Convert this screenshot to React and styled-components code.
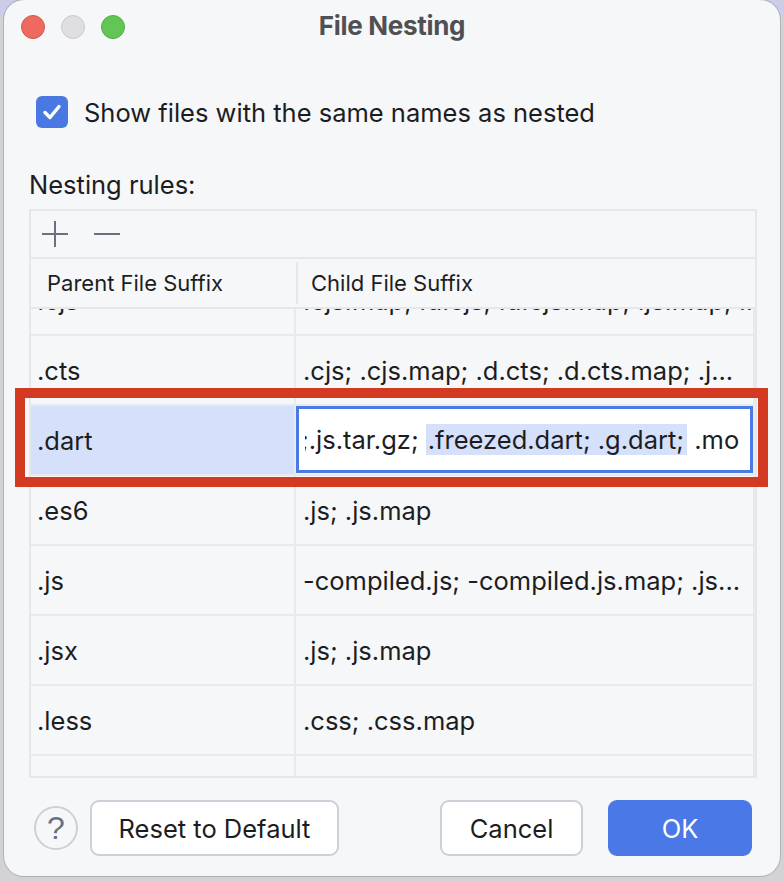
import React from 'react';
import styled, { createGlobalStyle } from 'styled-components';

const Global = createGlobalStyle`
  html, body { margin: 0; padding: 0; }
  body {
    width: 784px;
    height: 882px;
    overflow: hidden;
    background: #d3d3d6;
    font-family: Inter, "Noto Sans", "Liberation Sans", sans-serif;
    color: #1d1d1f;
  }
`;

const Screen = styled.div`
  position: relative;
  width: 784px;
  height: 882px;
  padding-left: 4px;
  box-sizing: border-box;
  background: linear-gradient(180deg, #cbcde6 0px, #cbcde6 16px, #d3d3d6 16px);
`;

const Window = styled.div`
  width: 776px;
  height: 876px;
  border-radius: 20px;
  background: #f6f7f9;
  box-shadow: 0 0 0 1px rgba(0, 0, 0, 0.16);
  display: flex;
  flex-direction: column;
  overflow: hidden;
`;

const TitleBar = styled.div`
  height: 52px;
  display: grid;
  grid-template-columns: 1fr auto 1fr;
  align-items: center;
  padding: 2px 17px 0;
  box-sizing: border-box;
`;

const Lights = styled.div`
  display: flex;
  gap: 16px;
`;

const Light = styled.span`
  width: 24px;
  height: 24px;
  border-radius: 50%;
  box-sizing: border-box;
  background: ${p => p.$c};
  border: 1px solid ${p => p.$b};
`;

const Title = styled.div`
  font-size: 26px;
  font-weight: 700;
  color: #505053;
  margin-top: -4px;
  letter-spacing: -0.3px;
`;

const Content = styled.div`
  flex: 1;
  display: flex;
  flex-direction: column;
  padding: 0 23px 20px 25px;
`;

const CheckRow = styled.label`
  margin-top: 44px;
  padding-left: 7px;
  display: flex;
  align-items: center;
  gap: 16px;
  height: 32px;
  font-size: 25.5px;
`;

const CheckBox = styled.span`
  width: 32px;
  height: 32px;
  border-radius: 6px;
  background: #4a78e3;
  display: flex;
  align-items: center;
  justify-content: center;
`;

const SectionLabel = styled.div`
  margin-top: 42px;
  height: 30px;
  line-height: 30px;
  font-size: 25.5px;
`;

const Table = styled.div`
  margin-top: 9px;
  height: 569px;
  border: 2px solid #e6e7eb;
  box-sizing: border-box;
  display: flex;
  flex-direction: column;
`;

const Toolbar = styled.div`
  height: 48px;
  border-bottom: 2px solid #e6e7eb;
  box-sizing: border-box;
  display: flex;
  align-items: center;
  padding-left: 11px;
  gap: 26px;
`;

const Header = styled.div`
  height: 50px;
  border-bottom: 2px solid #e6e7eb;
  box-sizing: border-box;
  display: grid;
  grid-template-columns: 265px 1fr;
  align-items: center;
  font-size: 22px;
`;

const HeaderCell = styled.div`
  position: relative;
  padding-left: ${p => (p.$first ? '16px' : '15px')};
  height: 100%;
  display: flex;
  align-items: center;
  &::before {
    content: ${p => (p.$first ? 'none' : "''")};
    position: absolute;
    left: 0;
    top: 3px;
    bottom: 3px;
    width: 2px;
    background: #e6e7eb;
  }
`;

const Body = styled.div`
  flex: 1;
  overflow: hidden;
`;

const Rows = styled.div`
  margin-top: -43px;
`;

const Row = styled.div`
  height: 70px;
  border-bottom: 2px solid #e9eaee;
  box-sizing: border-box;
  display: grid;
  grid-template-columns: 263px 2px 1fr 2px;
  font-size: 25.5px;
`;

const Sep = styled.div`
  background: #e9eaee;
`;

const Cell = styled.div`
  display: flex;
  align-items: center;
  padding-left: ${p => (p.$first ? '6px' : '7px')};
  white-space: nowrap;
  overflow: hidden;
  background: ${p => (p.$selected ? '#d5e0fa' : 'transparent')};
`;

const EditorCell = styled.div`
  display: flex;
  align-items: stretch;
  padding: 0 0 1px;
  background: #f6f7f9;
`;

const Editor = styled.div`
  flex: 1;
  background: #ffffff;
  border: 3px solid #4a7ae6;
  box-sizing: border-box;
  display: flex;
  align-items: center;
  padding-left: 6px;
`;

const Viewport = styled.div`
  flex: 1;
  overflow: hidden;
  white-space: nowrap;
`;

const Scrolled = styled.span`
  display: inline-block;
  margin-left: -4px;
`;

const Highlight = styled.span`
  background: #d5e0fa;
  line-height: 31px;
  display: inline-block;
  padding: 0 3px 0 2px;
`;

const Footer = styled.div`
  margin-top: 22px;
  height: 56px;
  display: flex;
  align-items: center;
  padding: 0 5px;
`;

const Help = styled.button`
  width: 44px;
  height: 44px;
  border-radius: 50%;
  border: 2px solid #cdd0d8;
  background: #f6f7f9;
  color: #6c707e;
  font-family: "Liberation Sans", sans-serif;
  font-size: 32px;
  font-weight: 400;
  padding: 0;
  display: flex;
  align-items: center;
  justify-content: center;
  margin-right: 12px;
`;

const Button = styled.button`
  width: ${p => p.$w}px;
  height: 56px;
  border-radius: 9px;
  box-sizing: border-box;
  font-family: inherit;
  font-size: 25.5px;
  padding: 0;
  border: ${p => (p.$primary ? 'none' : '2px solid #cdd0d8')};
  background: ${p => (p.$primary ? '#4a78e6' : '#ffffff')};
  color: ${p => (p.$primary ? '#ffffff' : '#1d1d1f')};
  margin-left: ${p => p.$ml || 0}px;
`;

const Spacer = styled.div`
  flex: 1;
`;

const Annotation = styled.div`
  position: absolute;
  left: 15px;
  top: 388px;
  width: 753px;
  height: 99px;
  border: 10px solid #d23a21;
  box-sizing: border-box;
  pointer-events: none;
`;

const rows = [
  ['.cjs', '.cjs.map; .d.cjs; .d.cjs.map; .js.map; .map'],
  ['.cts', '.cjs; .cjs.map; .d.cts; .d.cts.map; .j...'],
  ['.dart', null],
  ['.es6', '.js; .js.map'],
  ['.js', '-compiled.js; -compiled.js.map; .js...'],
  ['.jsx', '.js; .js.map'],
  ['.less', '.css; .css.map'],
  ['', ''],
];

export default function App() {
  return (
    <>
      <Global />
      <Screen>
        <Window>
          <TitleBar>
            <Lights>
              <Light $c="#ee6a5f" $b="#d5574c" />
              <Light $c="#dfdfe1" $b="#c9c9cc" />
              <Light $c="#62c555" $b="#52ad45" />
            </Lights>
            <Title>File Nesting</Title>
            <div />
          </TitleBar>
          <Content>
            <CheckRow>
              <CheckBox>
                <svg width="22" height="22" viewBox="0 0 22 22">
                  <path d="M4 11.5 L9 16.5 L18 5.5" fill="none" stroke="#fff" strokeWidth="3.4" strokeLinecap="round" strokeLinejoin="round" />
                </svg>
              </CheckBox>
              Show files with the same names as nested
            </CheckRow>
            <SectionLabel>Nesting rules:</SectionLabel>
            <Table>
              <Toolbar>
                <svg width="26" height="26" viewBox="0 0 26 26">
                  <path d="M13 0 V26 M0 13 H26" stroke="#6c707e" strokeWidth="2" />
                </svg>
                <svg width="26" height="26" viewBox="0 0 26 26">
                  <path d="M0 13 H26" stroke="#6c707e" strokeWidth="2" />
                </svg>
              </Toolbar>
              <Header>
                <HeaderCell $first>Parent File Suffix</HeaderCell>
                <HeaderCell>Child File Suffix</HeaderCell>
              </Header>
              <Body>
                <Rows>
                  {rows.map(([a, b], i) => (
                    <Row key={i}>
                      <Cell $first $selected={b === null}>{a}</Cell>
                      <Sep />
                      {b === null ? (
                        <EditorCell>
                          <Editor>
                            <Viewport>
                              <Scrolled>
                                ;.js.tar.gz;{' '}
                                <Highlight>.freezed.dart; .g.dart;</Highlight>
                                {' '}.mo
                              </Scrolled>
                            </Viewport>
                          </Editor>
                        </EditorCell>
                      ) : (
                        <Cell>{b}</Cell>
                      )}
                      <Sep />
                    </Row>
                  ))}
                </Rows>
              </Body>
            </Table>
            <Footer>
              <Help>?</Help>
              <Button $w={249}>Reset to Default</Button>
              <Spacer />
              <Button $w={143}>Cancel</Button>
              <Button $w={144} $primary $ml={25}>OK</Button>
            </Footer>
          </Content>
        </Window>
        <Annotation />
      </Screen>
    </>
  );
}
